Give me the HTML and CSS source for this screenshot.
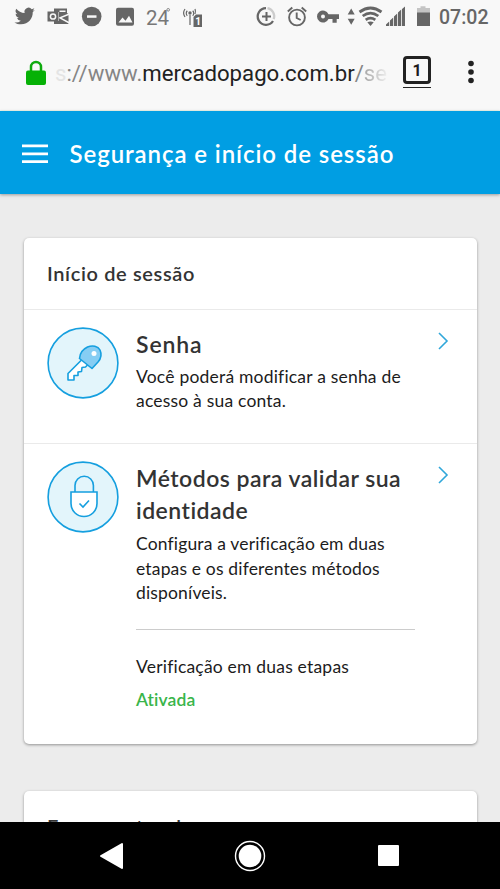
FILE: index.html
```html
<!DOCTYPE html>
<html lang="pt-BR">
<head>
<meta charset="utf-8">
<title>Segurança e início de sessão</title>
<link rel="stylesheet" href="styles.css">
</head>
<body>
<div class="phone">
  <div class="chrome">
    <div class="status">
      <svg class="status-icons" width="210" height="34" viewBox="0 0 210 34" fill="#666">
        <path transform="translate(13.500 5.700) scale(.93)" d="M23 4.500a9 9 0 0 1-2.500.7 4.400 4.400 0 0 0 1.900-2.400 9 9 0 0 1-2.800 1A4.400 4.400 0 0 0 12 7.900 12.500 12.500 0 0 1 3 3.200a4.400 4.400 0 0 0 1.300 5.900 4.400 4.400 0 0 1-2-.5c0 2.100 1.500 4 3.500 4.400a4.400 4.400 0 0 1-2 .1 4.400 4.400 0 0 0 4.100 3A9 9 0 0 1 1 18c2 1.300 4.400 2 7 2 8.300 0 13-7 12.700-13.300A9 9 0 0 0 23 4.500z"/>
        <path d="M54 8.500h13v4.500l1.500 1v10H54v-3h5v-9h-5z"/>
        <path d="M59.500 10.500h6v1.500h-6z" fill="#f8f8f8"/>
        <path d="M69.500 14l-9.500 3.800L69.500 23" fill="none" stroke="#f8f8f8" stroke-width="1.500"/>
        <rect x="47.500" y="11.500" width="11" height="10"/>
        <circle cx="53" cy="16.500" r="2.600" fill="none" stroke="#f8f8f8" stroke-width="1.500"/>
        <circle cx="91.700" cy="16.500" r="9.800"/><path d="M87 15.300h9.500v2.500H87z" fill="#f8f8f8"/>
        <rect x="116" y="7.800" width="18" height="18" rx="2"/><path d="M118.500 22.500l4-5 3 3.300 3.500-5 3.500 6.700z" fill="#f8f8f8"/>
        <g fill="none" stroke="#666" stroke-width="1.200"><path d="M190 15v10M187.300 10.800a3.500 3.500 0 0 0 0 5M192.700 10.800a3.500 3.500 0 0 1 0 5M185 9a7 7 0 0 0 0 8M195 9a7 7 0 0 1 0 5"/></g>
        <circle cx="190" cy="13" r="1.700"/>
        <path d="M196 14.500h6V27h-8.500V17z"/>
        <text class="temp" x="146" y="25">24</text>
        <circle cx="168.200" cy="9.800" r="1.300" fill="none" stroke="#777" stroke-width=".9"/>
        <text class="sim" x="195.300" y="25">1</text>
      </svg>
      <svg class="status-icons" width="180" height="34" viewBox="255 0 180 34" fill="#666">
        <g fill="none" stroke="#666" stroke-width="2.300"><path d="M266 8.200a8.300 8.300 0 1 0 7 12.800"/><path d="M267.500 8.200a8.300 8.300 0 0 1 6.200 11" stroke="#ccc"/><path d="M262 16.500h9M266.500 12v9" stroke-width="2"/></g>
        <g fill="none" stroke="#666" stroke-width="1.900"><circle cx="297" cy="17.500" r="7.900"/><path d="M296.700 12.500v5.500l4 2M287.800 11.500l4.500-4M306.200 11.500l-4.500-4"/></g>
        <path d="M328.500 14.200A6 6 0 1 0 328.500 19h4v3.700h4.200V19h2.300v-4.800z"/><circle cx="323" cy="16.500" r="2" fill="#f8f8f8"/>
        <path d="M351.200 8.500l3.500 6h-7zM351.200 24.800l3.500-6h-7z"/>
        <g fill="none" stroke="#666" stroke-width="2.800"><path d="M359.500 12q11-8 22 0M362.700 16q7.800-5.800 15.600 0M365.700 19.800q4.800-3.400 9.600 0"/></g><path d="M367.300 22.300q3.200-1.600 6.400 0l-3.200 3.700z"/>
        <path d="M386 26v-1.500l3.200-3V26zM390 26v-5.500l3.200-3V26zM394 26v-9.500l3.200-3V26zM398 26V12.500l3.200-3V26zM402 26V9l3-2.500V26z"/>
        <path d="M417 8h3.500V6.300h5V8h4.500v5h-13z" fill="#c4c4c4"/><path d="M417 12.500h13V26h-13z"/>
      </svg>
      <span class="clock">07:02</span>
    </div>
    <div class="address">
      <svg class="secure" width="22" height="28" viewBox="0 0 22 28"><path d="M6 13V8a5 5 0 0 1 10 0v5" fill="none" stroke="#0eaa0e" stroke-width="2.500"/><rect x="1" y="11.500" width="20" height="14.500" rx="2" fill="#06b106"/></svg>
      <div class="url"><span class="scheme">s</span><span class="soft">://www.</span>mercadopago.com.br<span class="soft">/</span><span class="fade">se</span></div>
      <div class="tabs"><span class="tab-count">1</span></div>
      <svg class="more" width="8" height="24" viewBox="0 0 8 24" fill="#222"><circle cx="4" cy="3.500" r="2.800"/><circle cx="4" cy="12" r="2.800"/><circle cx="4" cy="20.500" r="2.800"/></svg>
    </div>
  </div>
  <header class="appbar">
    <svg class="menu" width="26" height="20" viewBox="0 0 26 20" fill="#fff"><path d="M0 .5h26v2.700H0zM0 8.500h26v2.700H0zM0 16.300h26v2.700H0z"/></svg>
    <h1>Segurança e início de sessão</h1>
  </header>
  <main class="content">
    <section class="card">
      <h2>Início de sessão</h2>
      <div class="row row-password">
        <svg class="badge" width="72" height="72" viewBox="0 0 72 72" fill="none" stroke="#159fdf" stroke-width="1.600" stroke-linejoin="round"><circle cx="36" cy="36" r="34.900" fill="#e3f5fb"/><path d="M34.500 33L21 46.500V53h6v-4.500h4V45l3.500-.5.500-4 3.500-.5 2-2" fill="#fff"/><path d="M32.500 31.500q.5-8 8-11.500c5-2 10.500-1 12.500 3 1.800 4 1 8.500-2 12l-6 6.500z" fill="#86cdf3"/><circle cx="47" cy="26.500" r="2.500" fill="#fff" stroke="none"/></svg>
        <div class="body"><h3><span class="wide">Senha</span></h3><p>Você poderá modificar a senha de<br>acesso à sua conta.</p></div>
        <svg class="chevron" width="12" height="18" viewBox="0 0 12 18"><path d="M2 1l8 8-8 8" fill="none" stroke="#30a7da" stroke-width="1.600"/></svg>
      </div>
      <div class="row row-methods">
        <svg class="badge" width="72" height="72" viewBox="0 0 72 72" fill="none" stroke="#159fdf" stroke-width="1.600"><circle cx="36" cy="36" r="34.900" fill="#e3f5fb"/><path d="M28 31V24.500a9.200 9.200 0 0 1 18.400 0V31"/><path d="M24 31h26v11.500a13 13 0 0 1-26 0z" fill="#fff"/><path d="M32.500 42.500l3.500 3.500 6-6.500"/></svg>
        <div class="body"><h3>Métodos para validar sua<br>identidade</h3><p>Configura a verificação em duas<br>etapas e os diferentes métodos<br>disponíveis.</p>
          <div class="state"><span>Verificação em duas etapas</span><strong>Ativada</strong></div>
        </div>
        <svg class="chevron" width="12" height="18" viewBox="0 0 12 18"><path d="M2 1l8 8-8 8" fill="none" stroke="#30a7da" stroke-width="1.600"/></svg>
      </div>
    </section>
    <section class="card next"><h2>Ferramentas de</h2></section>
  </main>
  <nav class="navbar">
    <svg width="26" height="30" viewBox="0 0 26 30"><path d="M2 15L23 3v24z" fill="#fff" stroke="#fff" stroke-width="2" stroke-linejoin="round"/></svg>
    <svg width="32" height="32" viewBox="0 0 32 32"><circle cx="16" cy="16" r="14.500" fill="none" stroke="#fff" stroke-width="1.400"/><circle cx="16" cy="16" r="11.300" fill="#fff"/></svg>
    <span class="recent"></span>
  </nav>
</div>
</body>
</html>
```
FILE: styles.css
```css
* { box-sizing: border-box; }
body { margin: 0; font-family: Lato, "Open Sans", sans-serif; color: #1c1c1c; }
h1, h2, h3, p { margin: 0; }
.phone { width: 500px; height: 889px; overflow: hidden; display: flex; flex-direction: column; background: #ececec; }
.chrome { flex: none; height: 111px; background: #f8f8f8; border-bottom: 1px solid #eef8ee; font-family: Roboto, sans-serif; }
.status { display: flex; height: 34px; }
.status-icons { display: block; flex: none; }
.status-icons + .status-icons { margin-left: 45px; }
.temp { font-size: 20.500px; font-weight: 400; fill: #777; }
.sim { font-size: 10px; font-weight: 700; fill: #fff; }
.clock { margin-left: 4px; font-size: 19.500px; line-height: 35px; font-weight: 500; color: #666; white-space: nowrap; }
.address { display: flex; align-items: center; height: 76px; padding: 0 25px; }
.secure { flex: none; margin-top: 1px; }
.url { width: 331px; margin-left: 8px; padding-top: 1px; font-size: 22.200px; color: #222; white-space: nowrap; }
.scheme { color: #e4e4e4; }
.soft { color: #858585; }
.fade { color: transparent; background: linear-gradient(90deg, #a5a5a5, #eee); background-clip: text; -webkit-background-clip: text; }
.tabs { width: 28px; height: 32px; margin-left: 17px; border-bottom: 1.500px solid #222; }
.tab-count { display: block; height: 28px; border: 3px solid #222; border-radius: 4px; font-size: 16px; font-weight: 700; line-height: 23px; text-align: center; }
.more { margin-left: 36px; }
.appbar { position: relative; flex: none; display: flex; align-items: center; height: 83px; padding: 2px 22px 0; background: #009ee3; color: #fff; box-shadow: 0 1px 3px rgba(0,0,0,.35); }
.menu { flex: none; }
.appbar h1 { margin-left: 21.500px; font-size: 24px; font-weight: 600; letter-spacing: .92px; white-space: nowrap; }
.content { flex: 1; min-height: 0; overflow: hidden; padding: 44px 23.500px 0; }
.card { height: 506px; background: #fff; border-radius: 5px; box-shadow: 0 1px 3px rgba(0,0,0,.38); }
.card h2 { height: 70.500px; padding: 0 23.500px; font-size: 20px; line-height: 71px; font-weight: 600; letter-spacing: .63px; color: #333; white-space: nowrap; }
.row { display: flex; align-items: flex-start; padding: 17px 28px 0 23px; border-top: 1px solid #eaeaea; }
.row-password { height: 134.500px; }
.badge { flex: none; }
.body { flex: none; width: 279px; margin: 1px 0 0 17.500px; white-space: nowrap; }
.body h3 { font-size: 23px; line-height: 32px; font-weight: 600; letter-spacing: .48px; color: #333; }
.body h3 .wide { letter-spacing: .9px; }
.body p { font-size: 17.500px; line-height: 24.700px; margin-top: 5px; letter-spacing: .2px; }
.row-methods p { margin-top: 6px; letter-spacing: .16px; }
.chevron { margin: 5px 0 0 auto; }
.state { display: flex; flex-direction: column; margin-top: 23px; padding-top: 21px; border-top: 1px solid #ccc; font-size: 17.500px; line-height: 32.500px; letter-spacing: .2px; }
.state strong { font-weight: 600; letter-spacing: .1px; color: #39b54a; }
.next { margin-top: 47px; }
.navbar { flex: none; display: flex; align-items: center; height: 67px; padding-left: 98.500px; background: #000; }
.navbar svg + svg { margin-left: 109px; }
.recent { width: 21px; height: 21px; margin-left: 112.500px; border-radius: 1px; background: #fff; }
```
